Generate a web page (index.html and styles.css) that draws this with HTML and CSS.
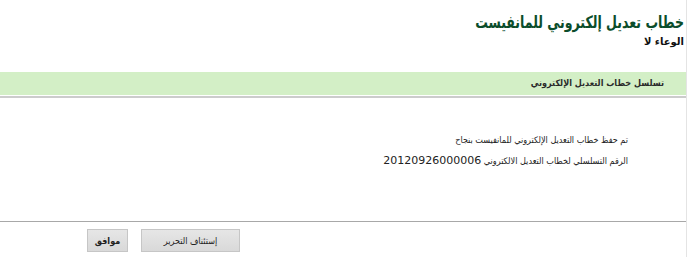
FILE: index.html
```html
<!DOCTYPE html>
<html lang="ar" dir="rtl">
<head>
<meta charset="utf-8">
<title>خطاب تعديل إلكتروني للمانفيست</title>
<link rel="stylesheet" href="styles.css">
</head>
<body>
<div class="page">
  <div class="header">
    <h1 class="title">خطاب تعديل إلكتروني للمانفيست</h1>
    <div class="subtitle">الوعاء لا</div>
  </div>
  <div class="band">تسلسل خطاب التعديل الإلكتروني</div>
  <div class="content">
    <p class="msg">تم حفظ خطاب التعديل الإلكتروني للمانفيست بنجاح</p>
    <p class="msg">الرقم التسلسلي لخطاب التعديل الالكتروني <span class="num">20120926000006</span></p>
  </div>
  <div class="actions">
    <button class="btn btn-wide" type="button">إستئناف التحرير</button>
    <button class="btn" type="button">موافق</button>
  </div>
</div>
</body>
</html>
```
FILE: styles.css
```css
html, body {
  margin: 0;
  padding: 0;
  background: #ffffff;
}
body {
  font-family: "DejaVu Sans Condensed", "DejaVu Sans", sans-serif;
  font-stretch: condensed;
  color: #222;
}
.page {
  width: 687px;
  min-height: 257px;
  border-right: 1px solid #e4e4e4;
  box-sizing: border-box;
}
.header {
  padding: 11px 2px 0 0;
  height: 61px;
  box-sizing: border-box;
}
.title {
  margin: 0;
  font-size: 17px;
  line-height: 22px;
  font-weight: bold;
  color: #0b4d2b;
  white-space: nowrap;
  transform: scaleX(0.82);
  transform-origin: right center;
}
.subtitle {
  margin-top: 3px;
  font-family: "DejaVu Sans", sans-serif;
  font-stretch: normal;
  font-size: 10px;
  font-weight: bold;
  color: #111;
  line-height: 11px;
}
.band {
  margin-top: 11px;
  height: 23px;
  line-height: 23px;
  background: #d3efc6;
  padding-right: 22px;
  font-size: 9px;
  font-weight: bold;
  color: #2a2a2a;
  border-bottom: 1px solid #ffffff;
  box-shadow: 0 2px 0 #cccccc;
}
.content {
  height: 126px;
  box-sizing: border-box;
  padding: 38px 58px 0 0;
  border-bottom: 1px solid #a8a8a8;
}
.msg {
  margin: 0 0 7px 0;
  font-size: 9px;
  line-height: 13px;
  color: #222;
}
.num {
  font-family: "DejaVu Sans", sans-serif;
  font-stretch: normal;
  font-size: 11px;
}
.actions {
  display: flex;
  justify-content: flex-end;
  gap: 13px;
  padding: 7px 0 0 87px;
}
.btn {
  font-family: "DejaVu Sans Condensed", "DejaVu Sans", sans-serif;
  font-stretch: condensed;
  font-size: 9px;
  font-weight: bold;
  color: #222;
  height: 23px;
  width: 41px;
  background: linear-gradient(#e6e6e6, #d9d9d9);
  border: 1px solid #c6c6c6;
  padding: 0;
}
.btn-wide {
  width: 99px;
  font-weight: normal;
}
```
